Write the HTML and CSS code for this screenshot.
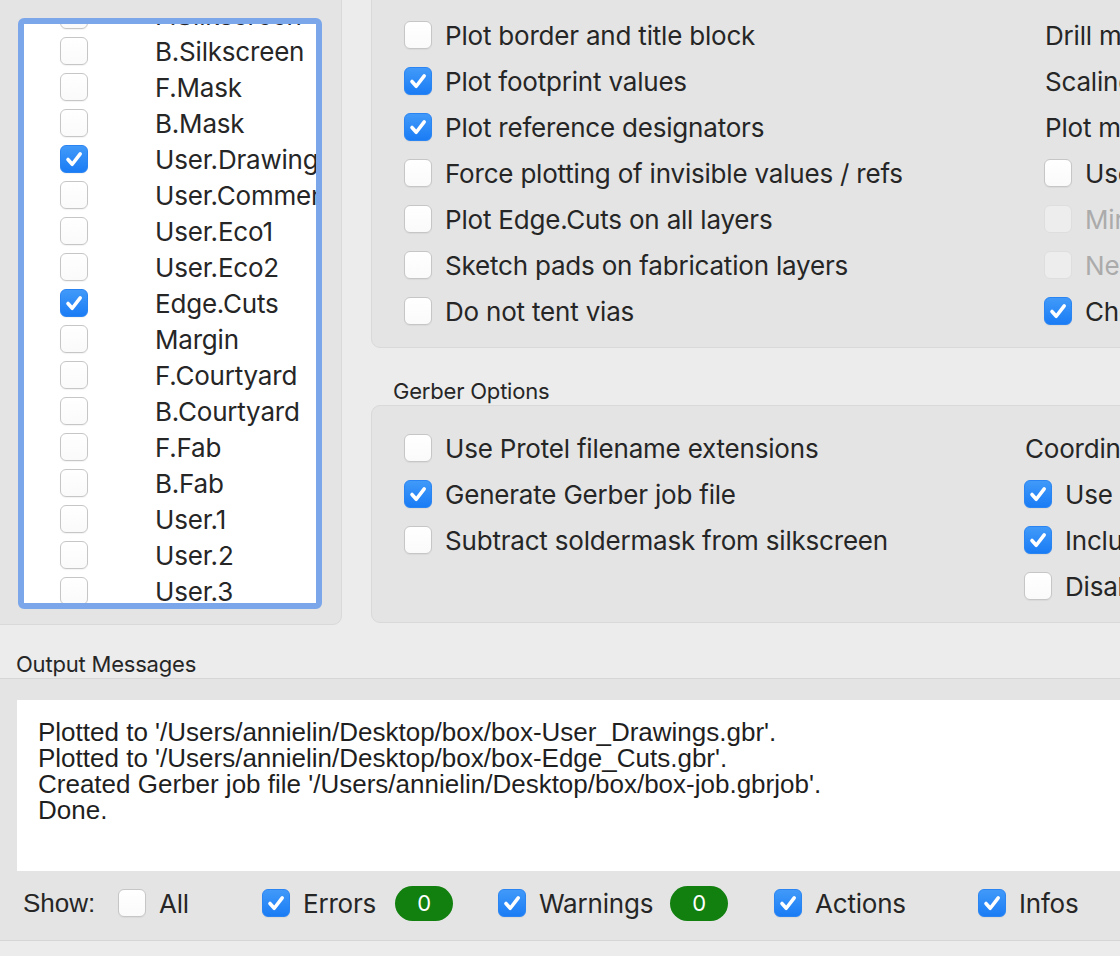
FILE: index.html
```html
<!DOCTYPE html>
<html>
<head>
<meta charset="utf-8">
<title>Plot</title>
<link rel="stylesheet" href="styles.css">
</head>
<body>
<div class="top">
  <div class="layers-panel">
    <div class="layer-list">
      <div class="layer-scroll">
        <div class="lrow"><span class="cb"></span><span class="lname">F.Silkscreen</span></div>
        <div class="lrow"><span class="cb"></span><span class="lname">B.Silkscreen</span></div>
        <div class="lrow"><span class="cb"></span><span class="lname">F.Mask</span></div>
        <div class="lrow"><span class="cb"></span><span class="lname">B.Mask</span></div>
        <div class="lrow"><span class="cb on"><svg viewBox="0 0 28 28"><path d="M7.5 14.5l4.6 5.2 8.6-11.2"/></svg></span><span class="lname">User.Drawings</span></div>
        <div class="lrow"><span class="cb"></span><span class="lname">User.Comments</span></div>
        <div class="lrow"><span class="cb"></span><span class="lname">User.Eco1</span></div>
        <div class="lrow"><span class="cb"></span><span class="lname">User.Eco2</span></div>
        <div class="lrow"><span class="cb on"><svg viewBox="0 0 28 28"><path d="M7.5 14.5l4.6 5.2 8.6-11.2"/></svg></span><span class="lname">Edge.Cuts</span></div>
        <div class="lrow"><span class="cb"></span><span class="lname">Margin</span></div>
        <div class="lrow"><span class="cb"></span><span class="lname">F.Courtyard</span></div>
        <div class="lrow"><span class="cb"></span><span class="lname">B.Courtyard</span></div>
        <div class="lrow"><span class="cb"></span><span class="lname">F.Fab</span></div>
        <div class="lrow"><span class="cb"></span><span class="lname">B.Fab</span></div>
        <div class="lrow"><span class="cb"></span><span class="lname">User.1</span></div>
        <div class="lrow"><span class="cb"></span><span class="lname">User.2</span></div>
        <div class="lrow"><span class="cb"></span><span class="lname">User.3</span></div>
        <div class="lrow"><span class="cb"></span><span class="lname">User.4</span></div>
      </div>
    </div>
  </div>

  <div class="right-col">
    <div class="group opts">
      <div class="col col-a">
        <div class="orow"><span class="cb"></span><span class="olabel">Plot border and title block</span></div>
        <div class="orow"><span class="cb on"><svg viewBox="0 0 28 28"><path d="M7.5 14.5l4.6 5.2 8.6-11.2"/></svg></span><span class="olabel">Plot footprint values</span></div>
        <div class="orow"><span class="cb on"><svg viewBox="0 0 28 28"><path d="M7.5 14.5l4.6 5.2 8.6-11.2"/></svg></span><span class="olabel">Plot reference designators</span></div>
        <div class="orow"><span class="cb"></span><span class="olabel">Force plotting of invisible values / refs</span></div>
        <div class="orow"><span class="cb"></span><span class="olabel">Plot Edge.Cuts on all layers</span></div>
        <div class="orow"><span class="cb"></span><span class="olabel">Sketch pads on fabrication layers</span></div>
        <div class="orow"><span class="cb"></span><span class="olabel">Do not tent vias</span></div>
      </div>
      <div class="col col-b">
        <div class="orow"><span class="olabel plain">Drill marks:</span></div>
        <div class="orow"><span class="olabel plain">Scaling:</span></div>
        <div class="orow"><span class="olabel plain">Plot mode:</span></div>
        <div class="orow"><span class="cb"></span><span class="olabel">Use drill/place file origin</span></div>
        <div class="orow"><span class="cb dis"></span><span class="olabel dim">Mirrored plot</span></div>
        <div class="orow"><span class="cb dis"></span><span class="olabel dim">Negative plot</span></div>
        <div class="orow"><span class="cb on"><svg viewBox="0 0 28 28"><path d="M7.5 14.5l4.6 5.2 8.6-11.2"/></svg></span><span class="olabel">Check zone fills before plotting</span></div>
      </div>
    </div>

    <div class="group-label">Gerber Options</div>

    <div class="group gerber">
      <div class="col col-g">
        <div class="orow"><span class="cb"></span><span class="olabel">Use Protel filename extensions</span></div>
        <div class="orow"><span class="cb on"><svg viewBox="0 0 28 28"><path d="M7.5 14.5l4.6 5.2 8.6-11.2"/></svg></span><span class="olabel">Generate Gerber job file</span></div>
        <div class="orow"><span class="cb"></span><span class="olabel">Subtract soldermask from silkscreen</span></div>
      </div>
      <div class="col col-h">
        <div class="orow"><span class="olabel plain">Coordinate format:</span></div>
        <div class="orow"><span class="cb on"><svg viewBox="0 0 28 28"><path d="M7.5 14.5l4.6 5.2 8.6-11.2"/></svg></span><span class="olabel">Use extended X2 format</span></div>
        <div class="orow"><span class="cb on"><svg viewBox="0 0 28 28"><path d="M7.5 14.5l4.6 5.2 8.6-11.2"/></svg></span><span class="olabel">Include netlist attributes</span></div>
        <div class="orow"><span class="cb"></span><span class="olabel">Disable aperture macros</span></div>
      </div>
    </div>
  </div>
</div>

<div class="msg-label">Output Messages</div>
<div class="msg-panel">
  <div class="msg-text">
    <div>Plotted to '/Users/annielin/Desktop/box/box-User_Drawings.gbr'.</div>
    <div>Plotted to '/Users/annielin/Desktop/box/box-Edge_Cuts.gbr'.</div>
    <div>Created Gerber job file '/Users/annielin/Desktop/box/box-job.gbrjob'.</div>
    <div>Done.</div>
  </div>
  <div class="show-row">
    <span class="show-label">Show:</span>
    <div class="filter f-all"><span class="cb"></span><span class="flabel">All</span></div>
    <div class="filter f-err"><span class="cb on"><svg viewBox="0 0 28 28"><path d="M7.5 14.5l4.6 5.2 8.6-11.2"/></svg></span><span class="flabel">Errors</span><span class="badge">0</span></div>
    <div class="filter f-warn"><span class="cb on"><svg viewBox="0 0 28 28"><path d="M7.5 14.5l4.6 5.2 8.6-11.2"/></svg></span><span class="flabel">Warnings</span><span class="badge">0</span></div>
    <div class="filter f-act"><span class="cb on"><svg viewBox="0 0 28 28"><path d="M7.5 14.5l4.6 5.2 8.6-11.2"/></svg></span><span class="flabel">Actions</span></div>
    <div class="filter f-info"><span class="cb on"><svg viewBox="0 0 28 28"><path d="M7.5 14.5l4.6 5.2 8.6-11.2"/></svg></span><span class="flabel">Infos</span></div>
  </div>
</div>
</body>
</html>
```

FILE: styles.css
```css
html, body {
  margin: 0;
  padding: 0;
}
body {
  width: 1120px;
  height: 956px;
  overflow: hidden;
  background: #ececec;
  font-family: Inter, "Noto Sans", sans-serif;
  font-size: 26px;
  letter-spacing: -0.2px;
  color: #262626;
}

/* ---------- checkbox ---------- */
.cb {
  flex: none;
  box-sizing: border-box;
  width: 28px;
  height: 28px;
  border: 1px solid #c6c6c6;
  border-radius: 6px;
  background: linear-gradient(#ffffff, #fafafa);
  box-shadow: 0 1px 1px rgba(0, 0, 0, 0.05);
  display: flex;
  align-items: center;
  justify-content: center;
}
.cb svg {
  width: 28px;
  height: 28px;
  display: block;
}
.cb svg path {
  fill: none;
  stroke: #ffffff;
  stroke-width: 3.8;
  stroke-linecap: round;
  stroke-linejoin: round;
}
.cb.on {
  border-color: #2a84f2;
  background: linear-gradient(#419af9, #1a7cf5);
}
.cb.dis {
  border-color: #dedede;
  background: #ededed;
  box-shadow: none;
}

/* ---------- top area ---------- */
.top {
  display: flex;
  gap: 29px;
  margin-top: -10px;
  margin-left: -10px;
  height: 635px;
}

.layers-panel {
  flex: none;
  box-sizing: border-box;
  width: 352px;
  height: 635px;
  border: 1px solid #d9d9d9;
  border-radius: 9px;
  background: #e4e4e4;
  padding: 27px 0 0 27px;
}
.layer-list {
  box-sizing: border-box;
  width: 304px;
  height: 591px;
  border: 6px solid #7ba7ea;
  border-radius: 6px;
  background: #ffffff;
  overflow: hidden;
}
.layer-scroll {
  margin-top: -27px;
}
.lrow {
  display: flex;
  align-items: center;
  height: 36px;
  padding-left: 36px;
  white-space: nowrap;
}
.lname {
  margin-left: 67px;
}

.right-col {
  flex: none;
  width: 820px;
  display: flex;
  flex-direction: column;
}
.group {
  box-sizing: border-box;
  border: 1px solid #d9d9d9;
  border-radius: 9px;
  background: #e4e4e4;
  display: flex;
}
.opts {
  height: 358px;
  padding: 21px 0 0 32px;
}
.gerber {
  height: 218px;
  padding: 19px 0 0 32px;
}
.col {
  flex: none;
  display: flex;
  flex-direction: column;
}
.col-a { width: 640px; }
.col-g { width: 620px; }
.orow {
  display: flex;
  align-items: center;
  height: 46px;
  white-space: nowrap;
}
.olabel {
  margin-left: 13px;
}
.olabel.plain {
  margin-left: 1px;
}
.olabel.dim {
  color: #ababab;
}
.group-label {
  font-size: 22px;
  line-height: 26px;
  padding: 30px 0 0 22px;
  height: 27px;
}

/* ---------- output messages ---------- */
.msg-label {
  font-size: 22px;
  line-height: 26px;
  padding: 26px 0 0 16px;
  height: 27px;
}
.msg-panel {
  box-sizing: border-box;
  height: 263px;
  border-top: 1px solid #d6d6d6;
  border-bottom: 1px solid #d6d6d6;
  background: #e4e4e4;
  padding: 21px 0 0 17px;
}
.msg-text {
  box-sizing: border-box;
  height: 171px;
  background: #ffffff;
  padding: 19px 0 0 21px;
  font-family: "Liberation Sans", Arial, sans-serif;
  font-size: 26px;
  line-height: 26px;
  letter-spacing: 0;
  color: #1f1f1f;
  white-space: nowrap;
}
.show-row {
  display: flex;
  align-items: center;
  height: 64px;
  margin-left: -17px;
  padding-left: 23px;
  white-space: nowrap;
}
.show-label {
  font-family: "Liberation Sans", Arial, sans-serif;
  letter-spacing: 0;
  width: 95px;
}
.filter {
  flex: none;
  display: flex;
  align-items: center;
}
.flabel {
  flex: none;
  margin-left: 13px;
}
.f-all { width: 144px; }
.f-all .flabel { width: 50px; }
.f-err { width: 236px; }
.f-err .flabel { width: 92px; }
.f-warn { width: 276px; }
.f-warn .flabel { width: 131px; }
.f-act { width: 204px; }
.badge {
  flex: none;
  box-sizing: border-box;
  width: 58px;
  height: 35px;
  border-radius: 18px;
  background: #11800f;
  color: #ffffff;
  font-size: 22px;
  display: flex;
  align-items: center;
  justify-content: center;
}
```
